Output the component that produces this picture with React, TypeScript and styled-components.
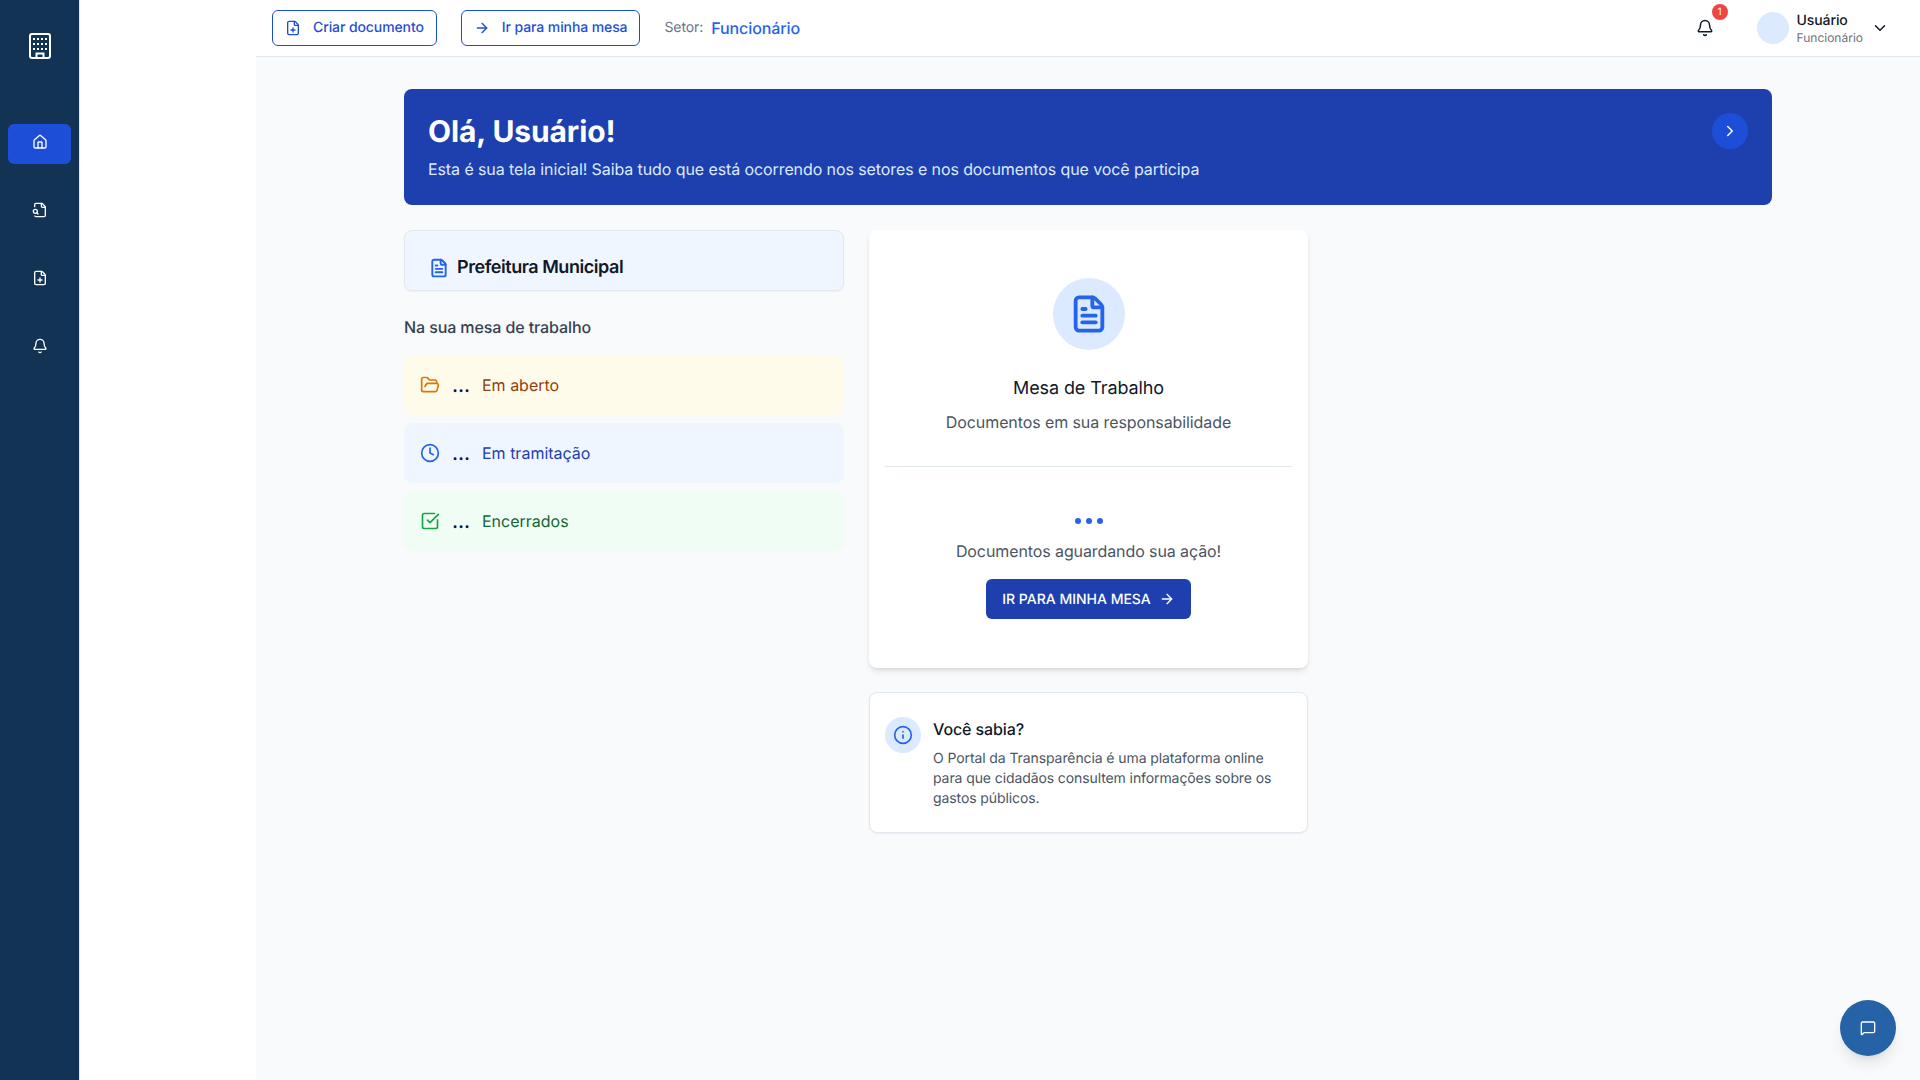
import styled, { createGlobalStyle } from 'styled-components';
import {
  ArrowRight,
  Bell,
  ChevronDown,
  ChevronRight,
  Clock,
  FilePlus,
  FileText,
  FolderOpen,
  House,
  Info,
  MessageSquare,
  SquareCheckBig,
} from 'lucide-react';
import { ReactNode } from 'react';

const GlobalStyle = createGlobalStyle`
  * {
    box-sizing: border-box;
  }

  body {
    margin: 0;
    font-family: Inter, 'Liberation Sans', sans-serif;
    letter-spacing: -0.006em;
    text-rendering: geometricPrecision;
    background-color: #f8fafc;
    color: #111827;
  }

  button {
    font-family: inherit;
    letter-spacing: inherit;
    text-rendering: inherit;
  }
`;

const Page = styled.div`
  display: flex;
  height: 1080px;
  overflow: hidden;
`;

const Rail = styled.aside`
  display: flex;
  flex-direction: column;
  align-items: stretch;
  width: 80px;
  padding: 33px 8px 0;
  background-color: #133355;
  border-right: 1px solid #e2e8f0;
`;

const LogoWrapper = styled.div`
  display: flex;
  justify-content: center;
  height: 26px;
  margin-bottom: 65px;
`;

const RailItem = styled.div<{ active?: boolean }>`
  display: flex;
  align-items: center;
  justify-content: center;
  height: 40px;
  padding-bottom: 4px;
  margin-bottom: 28px;
  border-radius: 6px;
  color: #ffffff;
  background-color: ${({ active }) => (active ? '#1d4ed8' : 'transparent')};
`;

const SidePanel = styled.div`
  width: 176px;
  background-color: #ffffff;
`;

const Content = styled.div`
  flex: 1;
  display: flex;
  flex-direction: column;
  min-width: 0;
`;

const TopBar = styled.header`
  display: flex;
  align-items: center;
  gap: 24px;
  height: 57px;
  padding: 0 31px 1px 16px;
  background-color: #ffffff;
  border-bottom: 1px solid #e2e8f0;
`;

const OutlineButton = styled.button`
  display: flex;
  align-items: center;
  gap: 12px;
  height: 36px;
  padding: 0 12px;
  border: 1px solid #1d4ed8;
  border-radius: 6px;
  background-color: #ffffff;
  color: #1d4ed8;
  font-size: 14px;
  font-weight: 500;
`;

const Sector = styled.div`
  display: flex;
  align-items: center;
  gap: 8px;
`;

const SectorLabel = styled.span`
  font-size: 14px;
  color: #6b7280;
`;

const SectorValue = styled.span`
  font-size: 16px;
  font-weight: 500;
  color: #2563eb;
`;

const TopRight = styled.div`
  display: flex;
  align-items: center;
  gap: 43px;
  margin-left: auto;
`;

const BellWrapper = styled.div`
  position: relative;
  display: flex;
  color: #111827;
`;

const BellBadge = styled.span`
  position: absolute;
  top: -15px;
  left: 16px;
  display: flex;
  align-items: center;
  justify-content: center;
  width: 16px;
  height: 16px;
  border-radius: 50%;
  background-color: #ef4444;
  color: #ffffff;
  font-size: 10px;
  line-height: 1;
`;

const UserBox = styled.div`
  display: flex;
  align-items: center;
  gap: 8px;
`;

const Avatar = styled.div`
  width: 32px;
  height: 32px;
  border-radius: 50%;
  background-color: #dbeafe;
`;

const UserText = styled.div`
  display: flex;
  flex-direction: column;
`;

const UserName = styled.span`
  margin-top: 1px;
  font-size: 14px;
  font-weight: 500;
  line-height: 19px;
  color: #111827;
`;

const UserRole = styled.span`
  font-size: 12px;
  line-height: 16px;
  letter-spacing: 0;
  color: #6b7280;
`;

const Main = styled.main`
  flex: 1;
  padding: 32px 148px 0;
  background-color: #f8fafc;
`;

const Banner = styled.section`
  display: flex;
  justify-content: space-between;
  height: 116px;
  padding: 24px;
  border-radius: 8px;
  background-color: #1e40af;
  color: #ffffff;
`;

const BannerTitle = styled.h1`
  margin: 1px 0 7px;
  font-size: 30px;
  font-weight: 700;
  line-height: 36px;
`;

const BannerText = styled.p`
  margin: 0;
  font-size: 16px;
  line-height: 24px;
  color: #dbeafe;
`;

const BannerArrow = styled.div`
  display: flex;
  align-items: center;
  justify-content: center;
  width: 36px;
  height: 36px;
  border-radius: 50%;
  background-color: #1d4ed8;
`;

const Columns = styled.div`
  display: grid;
  grid-template-columns: 440px 439px 1fr;
  column-gap: 25px;
  margin-top: 25px;
`;

const Column = styled.div`
  display: flex;
  flex-direction: column;
`;

const OrgCard = styled.div`
  display: flex;
  align-items: center;
  gap: 8px;
  padding: 23px 24px 8px;
  border: 1px solid #e2e8f0;
  border-radius: 8px;
  background-color: #eff6ff;
  box-shadow: 0 1px 2px rgba(0, 0, 0, 0.05);
  color: #2563eb;
`;

const OrgName = styled.h2`
  margin: 0;
  font-size: 18px;
  font-weight: 600;
  line-height: 28px;
  letter-spacing: -0.45px;
  color: #111827;
`;

const SectionLabel = styled.h3`
  margin: 24px 0 16px;
  font-size: 16px;
  font-weight: 500;
  line-height: 24px;
  color: #374151;
`;

const StatusList = styled.div`
  display: flex;
  flex-direction: column;
  gap: 8px;
`;

const tones = {
  amber: { bg: '#fffbeb', icon: '#d97706', text: '#92400e' },
  blue: { bg: '#eff6ff', icon: '#2563eb', text: '#1e40af' },
  green: { bg: '#f0fdf4', icon: '#16a34a', text: '#166534' },
};

type Tone = keyof typeof tones;

const StatusRow = styled.div<{ tone: Tone }>`
  display: flex;
  align-items: center;
  gap: 12px;
  height: 60px;
  padding: 0 16px;
  border-radius: 8px;
  background-color: ${({ tone }) => tones[tone].bg};

  svg {
    color: ${({ tone }) => tones[tone].icon};
  }
`;

const StatusCount = styled.span`
  width: 18px;
  font-size: 20px;
  font-weight: 500;
  line-height: 28px;
  color: #111827;
`;

const StatusLabel = styled.span<{ tone: Tone }>`
  font-size: 16px;
  line-height: 24px;
  letter-spacing: 0;
  color: ${({ tone }) => tones[tone].text};
`;

const DeskCard = styled.div`
  display: flex;
  flex-direction: column;
  align-items: center;
  height: 438px;
  padding: 48px 16px 0;
  border-radius: 8px;
  background-color: #ffffff;
  box-shadow: 0 4px 6px -1px rgba(0, 0, 0, 0.1), 0 2px 4px -2px rgba(0, 0, 0, 0.1);
  text-align: center;
`;

const DeskIcon = styled.div`
  display: flex;
  align-items: center;
  justify-content: center;
  width: 72px;
  height: 72px;
  border-radius: 50%;
  background-color: #dbeafe;
  color: #2563eb;
`;

const DeskTitle = styled.h3`
  margin: 25px 0 7px;
  font-size: 18px;
  font-weight: 400;
  line-height: 28px;
  color: #111827;
`;

const DeskText = styled.p`
  margin: 0;
  font-size: 16px;
  line-height: 24px;
  color: #4b5563;
`;

const Divider = styled.hr`
  align-self: stretch;
  height: 1px;
  margin: 32px 0 51px;
  border: 0;
  background-color: #e2e8f0;
`;

const LoadingDots = styled.div`
  display: flex;
  gap: 5px;
  margin-bottom: 15px;
`;

const LoadingDot = styled.span`
  width: 6px;
  height: 6px;
  border-radius: 50%;
  background-color: #2563eb;
`;

const PrimaryButton = styled.button`
  display: flex;
  align-items: center;
  gap: 8px;
  height: 40px;
  margin-top: 16px;
  padding: 0 16px;
  border: 0;
  border-radius: 6px;
  background-color: #1e40af;
  color: #ffffff;
  font-size: 14px;
  font-weight: 500;
  letter-spacing: 0;
`;

const TipCard = styled.div`
  display: flex;
  gap: 12px;
  margin-top: 24px;
  padding: 24px 15px 23px;
  border: 1px solid #e2e8f0;
  border-radius: 8px;
  background-color: #ffffff;
  box-shadow: 0 1px 2px rgba(0, 0, 0, 0.05);
`;

const TipIcon = styled.div`
  flex-shrink: 0;
  display: flex;
  align-items: center;
  justify-content: center;
  width: 36px;
  height: 36px;
  border-radius: 50%;
  background-color: #dbeafe;
  color: #2563eb;
`;

const TipTitle = styled.h4`
  margin: 0 0 8px;
  font-size: 16px;
  font-weight: 500;
  line-height: 24px;
  color: #111827;
`;

const TipText = styled.p`
  margin: 0;
  font-size: 14px;
  line-height: 20px;
  color: #4b5563;
`;

const ChatButton = styled.button`
  position: fixed;
  right: 24px;
  bottom: 24px;
  display: flex;
  align-items: center;
  justify-content: center;
  width: 56px;
  height: 56px;
  border: 0;
  border-radius: 50%;
  background-color: #2563a6;
  color: #ffffff;
  box-shadow: 0 10px 15px -3px rgba(0, 0, 0, 0.1), 0 4px 6px -4px rgba(0, 0, 0, 0.1);
`;

const BuildingLogo = () => (
  <svg width="22" height="26" viewBox="0 0 22 26" fill="none" stroke="#ffffff" strokeWidth="2">
    <rect x="1" y="1" width="20" height="24" rx="2" />
    <path d="M7.5 25v-4.5h7V25" />
    <g stroke="none" fill="#ffffff">
      {[6, 11, 16].map(y =>
        [5, 9, 13, 17].map(x => <rect key={`${x}-${y}`} x={x - 1} y={y - 1} width="2" height="2" />)
      )}
    </g>
  </svg>
);

const FileSearchIcon = () => (
  <svg width="16" height="16" viewBox="0 0 24 24" fill="none" stroke="currentColor" strokeWidth="2" strokeLinecap="round" strokeLinejoin="round">
    <path d="M14 2v4a2 2 0 0 0 2 2h4" />
    <path d="M4.268 21a2 2 0 0 0 1.727 1H18a2 2 0 0 0 2-2V7l-5-5H6a2 2 0 0 0-2 2v3" />
    <path d="m9 18-1.5-1.5" />
    <circle cx="5" cy="14" r="3" />
  </svg>
);

const statuses: { tone: Tone; label: string; icon: ReactNode }[] = [
  { tone: 'amber', label: 'Em aberto', icon: <FolderOpen size={20} /> },
  { tone: 'blue', label: 'Em tramitação', icon: <Clock size={20} /> },
  { tone: 'green', label: 'Encerrados', icon: <SquareCheckBig size={20} /> },
];

export default function App() {
  return (
    <Page>
      <GlobalStyle />
      <Rail>
        <LogoWrapper>
          <BuildingLogo />
        </LogoWrapper>
        <RailItem active>
          <House size={16} />
        </RailItem>
        <RailItem>
          <FileSearchIcon />
        </RailItem>
        <RailItem>
          <FilePlus size={16} />
        </RailItem>
        <RailItem>
          <Bell size={16} />
        </RailItem>
      </Rail>
      <SidePanel />
      <Content>
        <TopBar>
          <OutlineButton>
            <FilePlus size={16} />
            Criar documento
          </OutlineButton>
          <OutlineButton>
            <ArrowRight size={16} />
            Ir para minha mesa
          </OutlineButton>
          <Sector>
            <SectorLabel>Setor:</SectorLabel>
            <SectorValue>Funcionário</SectorValue>
          </Sector>
          <TopRight>
            <BellWrapper>
              <Bell size={18} />
              <BellBadge>1</BellBadge>
            </BellWrapper>
            <UserBox>
              <Avatar />
              <UserText>
                <UserName>Usuário</UserName>
                <UserRole>Funcionário</UserRole>
              </UserText>
              <ChevronDown size={18} />
            </UserBox>
          </TopRight>
        </TopBar>
        <Main>
          <Banner>
            <div>
              <BannerTitle>Olá, Usuário!</BannerTitle>
              <BannerText>Esta é sua tela inicial! Saiba tudo que está ocorrendo nos setores e nos documentos que você participa</BannerText>
            </div>
            <BannerArrow>
              <ChevronRight size={18} />
            </BannerArrow>
          </Banner>
          <Columns>
            <Column>
              <OrgCard>
                <FileText size={20} strokeWidth={2.3} />
                <OrgName>Prefeitura Municipal</OrgName>
              </OrgCard>
              <SectionLabel>Na sua mesa de trabalho</SectionLabel>
              <StatusList>
                {statuses.map(status => (
                  <StatusRow key={status.label} tone={status.tone}>
                    {status.icon}
                    <StatusCount>...</StatusCount>
                    <StatusLabel tone={status.tone}>{status.label}</StatusLabel>
                  </StatusRow>
                ))}
              </StatusList>
            </Column>
            <Column>
              <DeskCard>
                <DeskIcon>
                  <FileText size={40} strokeWidth={2.3} />
                </DeskIcon>
                <DeskTitle>Mesa de Trabalho</DeskTitle>
                <DeskText>Documentos em sua responsabilidade</DeskText>
                <Divider />
                <LoadingDots>
                  <LoadingDot />
                  <LoadingDot />
                  <LoadingDot />
                </LoadingDots>
                <DeskText>Documentos aguardando sua ação!</DeskText>
                <PrimaryButton>
                  IR PARA MINHA MESA
                  <ArrowRight size={16} />
                </PrimaryButton>
              </DeskCard>
              <TipCard>
                <TipIcon>
                  <Info size={20} />
                </TipIcon>
                <div>
                  <TipTitle>Você sabia?</TipTitle>
                  <TipText>O Portal da Transparência é uma plataforma online para que cidadãos consultem informações sobre os gastos públicos.</TipText>
                </div>
              </TipCard>
            </Column>
          </Columns>
        </Main>
      </Content>
      <ChatButton>
        <MessageSquare size={16} />
      </ChatButton>
    </Page>
  );
}
